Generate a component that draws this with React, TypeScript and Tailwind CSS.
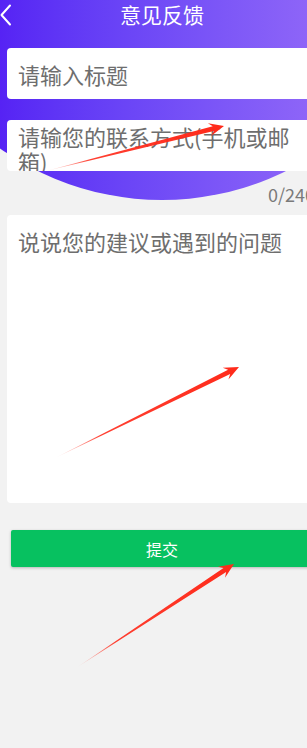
import React from 'react'

type Pt = [number, number]

// tapered annotation arrow: thin at the tail, arrowhead at the tip
function Arrow({ id, tail, tip }: { id: string; tail: Pt; tip: Pt }) {
  const dx = tip[0] - tail[0]
  const dy = tip[1] - tail[1]
  const len = Math.hypot(dx, dy)
  const ux = dx / len
  const uy = dy / len
  const nx = -uy
  const ny = ux
  const headLen = 15
  const headW = 6.5
  const shaftW = 2.4
  const base: Pt = [tip[0] - ux * headLen, tip[1] - uy * headLen]
  const neck: Pt = [tip[0] - ux * (headLen - 4), tip[1] - uy * (headLen - 4)]
  const pts: Pt[] = [
    tail,
    [neck[0] + nx * shaftW, neck[1] + ny * shaftW],
    [base[0] + nx * headW, base[1] + ny * headW],
    tip,
    [base[0] - nx * headW, base[1] - ny * headW],
    [neck[0] - nx * shaftW, neck[1] - ny * shaftW],
  ]
  return (
    <>
      <defs>
        <linearGradient id={id} gradientUnits="userSpaceOnUse" x1={tail[0]} y1={tail[1]} x2={tip[0]} y2={tip[1]}>
          <stop offset="0" stopColor="#ff2a1a" stopOpacity="0" />
          <stop offset="0.25" stopColor="#ff2a1a" stopOpacity="0.9" />
          <stop offset="1" stopColor="#ff2a1a" />
        </linearGradient>
      </defs>
      <polygon points={pts.map((p) => p.join(',')).join(' ')} fill={`url(#${id})`} />
    </>
  )
}

export default function App() {
  return (
    <div
      className="relative w-[307px] h-[748px] overflow-hidden bg-[#f2f2f2]"
      style={{ fontFamily: '"Noto Sans CJK SC", "Noto Sans", sans-serif' }}
    >
      <div className="relative w-[324px]">
        {/* purple header disc */}
        <div className="absolute left-[-118px] top-[-360px] w-[560px] h-[560px] rounded-full bg-linear-to-r from-[#5520f4] from-20% to-[#9268f8] to-80%" />

        <div className="relative">
          <div className="relative h-[28px] flex items-center justify-center">
            <svg className="absolute left-0 top-[4px]" width="12" height="22" viewBox="0 0 12 22">
              <path d="M10 1.5 L1.5 11 L10 20.5" fill="none" stroke="#fff" strokeWidth="2" strokeLinecap="round" strokeLinejoin="round" />
            </svg>
            <h1 className="text-white text-[21px] leading-none">意见反馈</h1>
          </div>

          <div className="mx-[7px] mt-[20px] h-[51px] bg-white rounded-[4px] px-[11px] flex items-center">
            <span className="text-[22px] leading-none text-[#6e6e6e]">请输入标题</span>
          </div>

          <div className="mx-[7px] mt-[21px] h-[51px] bg-white rounded-[4px] px-[11px] pt-[4px] overflow-hidden">
            <p className="text-[22px] leading-[25px] text-[#6e6e6e]">请输您的联系方式(手机或邮箱)</p>
          </div>

          <div className="mx-[7px] mt-[11px] text-right text-[18px] leading-[24px] text-[#7a7a7a] pr-[2px]">0/240</div>

          <div className="mx-[7px] mt-[9px] h-[288px] bg-white rounded-[4px] px-[11px] pt-[11px]">
            <p className="text-[22px] leading-[30px] text-[#6e6e6e]">说说您的建议或遇到的问题</p>
          </div>

          <button className="mx-[11px] mt-[27px] w-[302px] h-[37px] bg-[#07c160] rounded-[2px] shadow-[0_1px_3px_rgba(0,0,0,0.25)] flex items-center justify-center">
            <span className="text-white text-[16px] leading-none">提交</span>
          </button>
        </div>
      </div>

      <svg className="absolute inset-0 pointer-events-none" width="307" height="748">
        <Arrow id="a1" tail={[46, 171]} tip={[224, 126]} />
        <Arrow id="a2" tail={[55, 458]} tip={[239, 367]} />
        <Arrow id="a3" tail={[76, 668]} tip={[234, 564]} />
      </svg>
    </div>
  )
}
